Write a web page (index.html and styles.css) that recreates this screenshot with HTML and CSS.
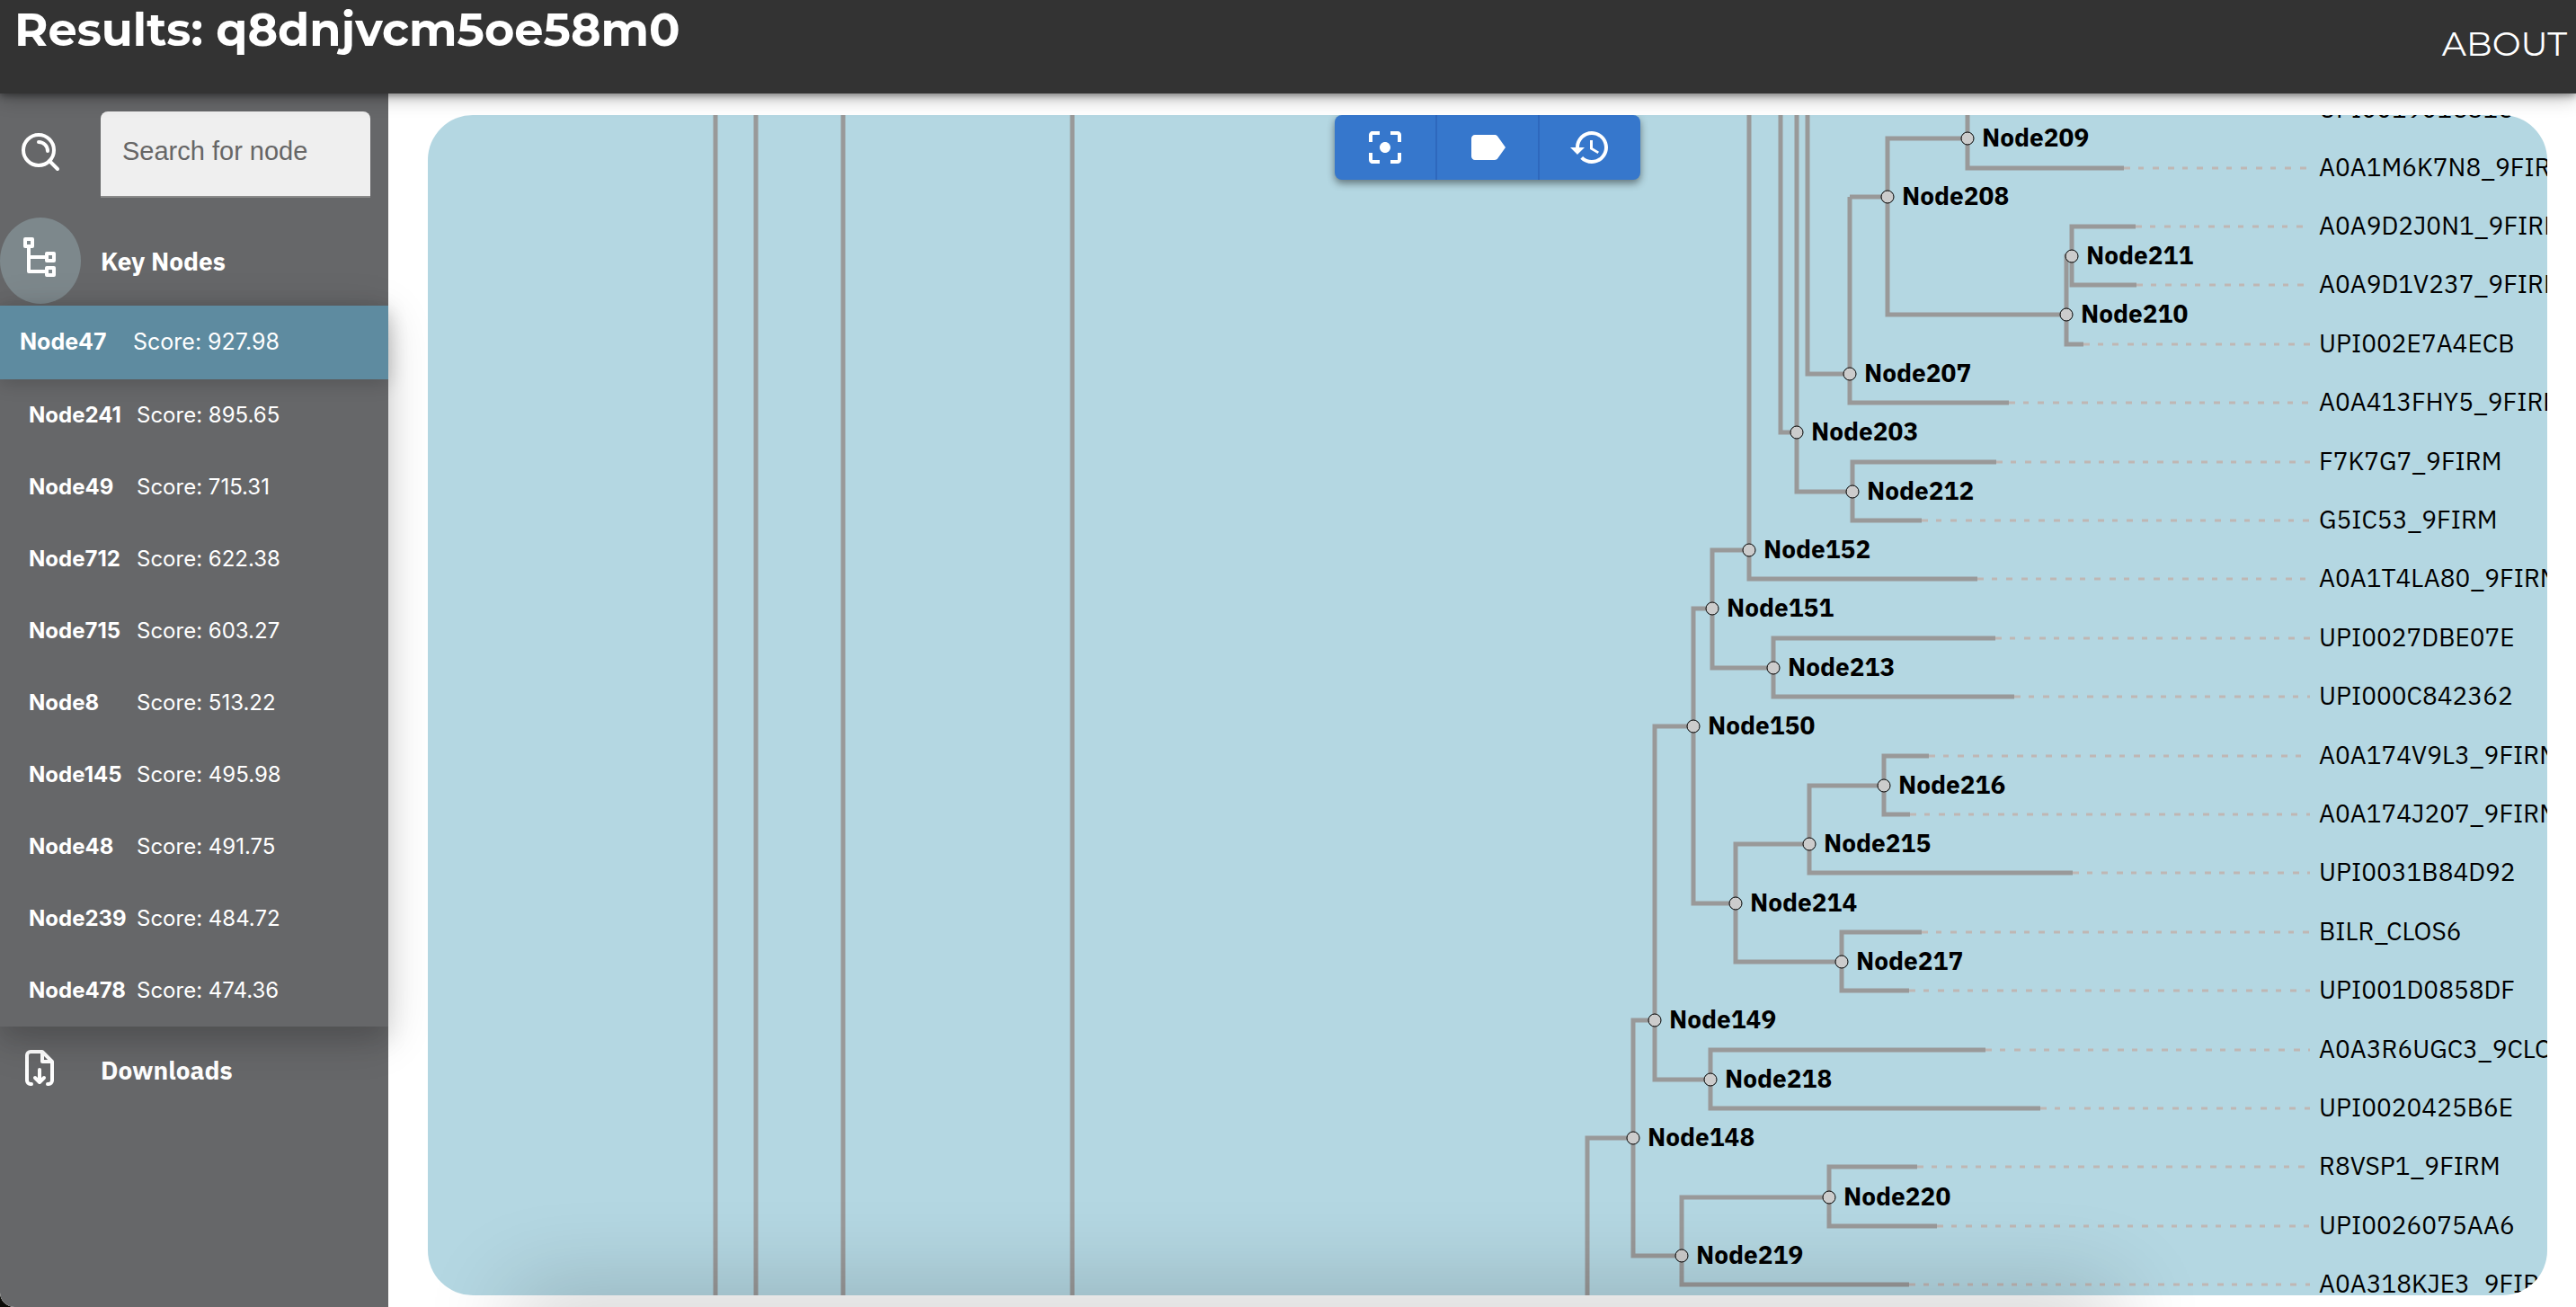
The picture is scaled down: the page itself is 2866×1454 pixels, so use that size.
FILE: index.html
```html
<!DOCTYPE html>
<html lang="en">
<head>
<meta charset="utf-8">
<title>Results: q8dnjvcm5oe58m0</title>
<link rel="stylesheet" href="styles.css">
</head>
<body>
<header class="topbar">
  <h1 class="title">Results: q8dnjvcm5oe58m0</h1>
  <a class="about" href="#about">ABOUT</a>
</header>
<div class="layout">
  <aside class="sidebar">
    <div class="side-row search-row">
      <label class="side-icon" for="node-search" aria-label="Search for node">
        <svg class="icon" width="48" height="48" viewBox="0 0 48 48"><g fill="none" stroke="#fff" stroke-width="4" stroke-linecap="round"><circle cx="21" cy="19" r="17"/><path d="M33 31l9 9M21 10a10 10 0 0 1 10 10"/></g></svg>
      </label>
      <input class="search" id="node-search" type="text" placeholder="Search for node">
    </div>
    <button class="side-row side-button" type="button">
      <span class="side-icon side-icon-active">
        <svg class="icon" width="48" height="48" viewBox="0 0 48 48"><g fill="none" stroke="#fff" stroke-width="4" stroke-linejoin="round"><path d="M6 0h8v8H6zM30 16h8v8h-8zM30 32h8v8h-8zM10 10v26h18M10 20h18"/></g></svg>
      </span>
      <span>Key Nodes</span>
    </button>
    <ul class="nodes">
      <li><button class="node active" type="button"><b>Node47</b><span>Score: 927.98</span></button></li>
      <li><button class="node" type="button"><b>Node241</b><span>Score: 895.65</span></button></li>
      <li><button class="node" type="button"><b>Node49</b><span>Score: 715.31</span></button></li>
      <li><button class="node" type="button"><b>Node712</b><span>Score: 622.38</span></button></li>
      <li><button class="node" type="button"><b>Node715</b><span>Score: 603.27</span></button></li>
      <li><button class="node" type="button"><b>Node8</b><span>Score: 513.22</span></button></li>
      <li><button class="node" type="button"><b>Node145</b><span>Score: 495.98</span></button></li>
      <li><button class="node" type="button"><b>Node48</b><span>Score: 491.75</span></button></li>
      <li><button class="node" type="button"><b>Node239</b><span>Score: 484.72</span></button></li>
      <li><button class="node" type="button"><b>Node478</b><span>Score: 474.36</span></button></li>
    </ul>
    <button class="side-row side-button" type="button">
      <span class="side-icon">
        <svg class="icon" width="48" height="48" viewBox="0 0 48 48"><g fill="none" stroke="#fff" stroke-width="4" stroke-linecap="round" stroke-linejoin="round"><path d="M13 40h-1a4 4 0 0 1-4-4V8a4 4 0 0 1 4-4h13l11 11v21a4 4 0 0 1-4 4h-1M25 5v10h10"/><path d="M22 24v13M17 33l5 5 5-5"/></g></svg>
      </span>
      <span>Downloads</span>
    </button>
  </aside>
  <main class="main">
    <section class="panel">
      <svg class="tree" role="img" aria-label="Phylogenetic tree">
        <g class="branches">
          <path d="M320 0V1400M365 0V1400M462 0V1400M717 0V1400"/>
          <path d="M1713 0V59H1887M1713 26H1624V222H1823M1624 91H1582M1900 124H1829V189H1901M1829 157H1823V255H1842"/>
          <path d="M1582 91V320H1759M1582 288H1535V0M1505 0V353H1523M1523 0V419H1585M1745 386H1585V451H1662"/>
          <path d="M1470 0V516H1724M1470 484H1429V615H1497M1744 582H1497V647H1765M1429 549H1408V877H1455"/>
          <path d="M1670 713H1620V778H1649M1620 746H1537V843H1830M1537 811H1455V942H1573M1662 909H1573V974H1648"/>
          <path d="M1408 680H1365V1073H1427M1733 1040H1427V1105H1794M1365 1007H1341V1269H1395M1341 1138H1290V1400"/>
          <path d="M1657 1170H1559V1236H1679M1559 1204H1395V1301H1648"/>
        </g>
        <g class="guides">
          <path d="M1887 59H2094M1900 124H2094M1901 189H2094M1842 255H2094M1759 320H2094M1745 386H2094M1662 451H2094M1724 516H2094M1744 582H2094M1765 647H2094"/>
          <path d="M1670 713H2094M1649 778H2094M1830 843H2094M1662 909H2094M1648 974H2094M1733 1040H2094M1794 1105H2094M1657 1170H2094M1679 1236H2094M1648 1301H2094"/>
        </g>
        <g class="leaves">
          <text x="2104" y="3">UPI001901C81C</text>
          <text x="2104" y="68">A0A1M6K7N8_9FIRM</text>
          <text x="2104" y="133">A0A9D2J0N1_9FIRM</text>
          <text x="2104" y="198">A0A9D1V237_9FIRM</text>
          <text x="2104" y="264">UPI002E7A4ECB</text>
          <text x="2104" y="329">A0A413FHY5_9FIRM</text>
          <text x="2104" y="395">F7K7G7_9FIRM</text>
          <text x="2104" y="460">G5IC53_9FIRM</text>
          <text x="2104" y="525">A0A1T4LA80_9FIRM</text>
          <text x="2104" y="591">UPI0027DBE07E</text>
          <text x="2104" y="656">UPI000C842362</text>
          <text x="2104" y="722">A0A174V9L3_9FIRM</text>
          <text x="2104" y="787">A0A174J207_9FIRM</text>
          <text x="2104" y="852">UPI0031B84D92</text>
          <text x="2104" y="918">BILR_CLOS6</text>
          <text x="2104" y="983">UPI001D0858DF</text>
          <text x="2104" y="1049">A0A3R6UGC3_9CLOT</text>
          <text x="2104" y="1114">UPI0020425B6E</text>
          <text x="2104" y="1179">R8VSP1_9FIRM</text>
          <text x="2104" y="1245">UPI0026075AA6</text>
          <text x="2104" y="1310">A0A318KJE3_9FIRM</text>
        </g>
        <g class="inner">
          <g transform="translate(1713 26)"><circle r="7"/><text x="16" y="9">Node209</text></g>
          <g transform="translate(1624 91)"><circle r="7"/><text x="16" y="9">Node208</text></g>
          <g transform="translate(1829 157)"><circle r="7"/><text x="16" y="9">Node211</text></g>
          <g transform="translate(1823 222)"><circle r="7"/><text x="16" y="9">Node210</text></g>
          <g transform="translate(1582 288)"><circle r="7"/><text x="16" y="9">Node207</text></g>
          <g transform="translate(1523 353)"><circle r="7"/><text x="16" y="9">Node203</text></g>
          <g transform="translate(1585 419)"><circle r="7"/><text x="16" y="9">Node212</text></g>
          <g transform="translate(1470 484)"><circle r="7"/><text x="16" y="9">Node152</text></g>
          <g transform="translate(1429 549)"><circle r="7"/><text x="16" y="9">Node151</text></g>
          <g transform="translate(1497 615)"><circle r="7"/><text x="16" y="9">Node213</text></g>
          <g transform="translate(1408 680)"><circle r="7"/><text x="16" y="9">Node150</text></g>
          <g transform="translate(1620 746)"><circle r="7"/><text x="16" y="9">Node216</text></g>
          <g transform="translate(1537 811)"><circle r="7"/><text x="16" y="9">Node215</text></g>
          <g transform="translate(1455 877)"><circle r="7"/><text x="16" y="9">Node214</text></g>
          <g transform="translate(1573 942)"><circle r="7"/><text x="16" y="9">Node217</text></g>
          <g transform="translate(1365 1007)"><circle r="7"/><text x="16" y="9">Node149</text></g>
          <g transform="translate(1427 1073)"><circle r="7"/><text x="16" y="9">Node218</text></g>
          <g transform="translate(1341 1138)"><circle r="7"/><text x="16" y="9">Node148</text></g>
          <g transform="translate(1559 1204)"><circle r="7"/><text x="16" y="9">Node220</text></g>
          <g transform="translate(1395 1269)"><circle r="7"/><text x="16" y="9">Node219</text></g>
        </g>
      </svg>
      <div class="toolbar" role="group" aria-label="Tree tools">
        <button class="tool" type="button" aria-label="Center tree"><svg class="icon" width="48" height="48" viewBox="0 0 24 24" fill="#fff"><path d="M5 15H3v4c0 1.100.9 2 2 2h4v-2H5v-4zM5 5h4V3H5c-1.100 0-2 .9-2 2v4h2V5zm14-2h-4v2h4v4h2V5c0-1.100-.9-2-2-2zm0 16h-4v2h4c1.100 0 2-.9 2-2v-4h-2v4zM12 9c-1.660 0-3 1.340-3 3s1.340 3 3 3 3-1.340 3-3-1.340-3-3-3z"/></svg></button>
        <button class="tool" type="button" aria-label="Toggle labels"><svg class="icon" width="48" height="48" viewBox="0 0 24 24" fill="#fff"><path d="M17.630 5.840C17.270 5.330 16.670 5 16 5L5 5.010C3.900 5.010 3 5.900 3 7v10c0 1.100.9 1.990 2 1.990L16 19c.67 0 1.270-.33 1.630-.84L22 12l-4.370-6.160z"/></svg></button>
        <button class="tool" type="button" aria-label="Reset view"><svg class="icon" width="48" height="48" viewBox="0 0 24 24" fill="#fff"><path d="M13 3c-4.970 0-9 4.030-9 9H1l3.890 3.890.07.14L9 12H6c0-3.870 3.130-7 7-7s7 3.130 7 7-3.130 7-7 7c-1.930 0-3.680-.79-4.940-2.060l-1.420 1.420C8.270 19.990 10.510 21 13 21c4.970 0 9-4.030 9-9s-4.030-9-9-9zm-1 5v5l4.280 2.540.72-1.210-3.500-2.080V8H12z"/></svg></button>
      </div>
    </section>
  </main>
</div>
</body>
</html>
```
FILE: styles.css
```css
* { box-sizing: border-box; }
html { background: #0c0c08; }
body {
  margin: 0;
  height: 100vh;
  display: flex;
  flex-direction: column;
  overflow: hidden;
  position: relative;
  background: #fff;
  border-bottom-left-radius: 16px;
  font-family: "IBM Plex Sans", "Noto Sans", sans-serif;
}
/* soft shade rising from the lower edge of the window */
body::after {
  content: "";
  position: absolute;
  left: 590px;
  right: 530px;
  bottom: -40px;
  height: 40px;
  box-shadow: 0 0 100px 20px rgba(0, 0, 0, 0.2);
  pointer-events: none;
}
button, input { font: inherit; border: 0; margin: 0; }
button { cursor: pointer; text-align: left; }
.icon { display: block; overflow: visible; }

.topbar {
  flex: none;
  height: 104px;
  display: flex;
  justify-content: space-between;
  align-items: flex-start;
  padding: 0 10px 0 16px;
  background: #333;
  color: #fff;
  font-family: "Montserrat", "DejaVu Sans", sans-serif;
  box-shadow: 0 4px 20px rgba(0, 0, 0, 0.3), 0 2px 8px rgba(0, 0, 0, 0.4);
  position: relative;
  z-index: 1;
}
.title { margin: 0; font-size: 51px; line-height: 66px; font-weight: 700; white-space: nowrap; }
.about { font-size: 38px; line-height: 98px; color: #fff; text-decoration: none; }

.layout { flex: 1; min-height: 0; display: flex; }
.sidebar {
  flex: none;
  width: 432px;
  padding-top: 20px;
  background: #666769;
  color: #fff;
  border-bottom-left-radius: 16px;
}
.side-row { display: flex; align-items: center; gap: 22px; width: 100%; padding: 0; }
.search-row { height: 96px; padding-right: 20px; margin-bottom: 22px; }
.side-button { height: 98px; background: none; color: #fff; font-size: 28px; font-weight: 700; align-items: flex-start; line-height: 98px; }
.side-icon { flex: none; width: 90px; height: 96px; padding-left: 22px; display: flex; align-items: center; }
.side-icon-active { background: #7d888c; border-radius: 50%; }
.search {
  flex: 1;
  min-width: 0;
  height: 96px;
  padding: 0 24px 6px;
  background: #efefef;
  border-bottom: 2px solid #8a8a8a;
  border-radius: 8px 8px 0 0;
  font-family: "Liberation Sans", sans-serif;
  font-size: 29px;
  color: #222;
}
.search::placeholder { color: #666; opacity: 1; }
.nodes {
  list-style: none;
  margin: 0;
  padding: 0;
  background: #666769;
  box-shadow: 0 12px 48px rgba(0, 0, 0, 0.16), 0 16px 24px rgba(0, 0, 0, 0.1);
  position: relative;
  font-family: "Inter", sans-serif;
}
.node {
  display: grid;
  grid-template-columns: 120px 1fr;
  align-items: center;
  width: 100%;
  height: 80px;
  padding: 0 0 2px 32px;
  background: none;
  color: #fff;
  font-size: 24px;
}
.node.active {
  height: 82px;
  grid-template-columns: 126px 1fr;
  padding-left: 22px;
  background: #5e8ba0;
  font-size: 25px;
  box-shadow: 0 4px 20px rgba(0, 0, 0, 0.18);
}

.main { flex: 1; min-width: 0; padding: 24px 32px 13px 44px; }
.panel {
  position: relative;
  height: 100%;
  overflow: hidden;
  border-radius: 50px;
  background: #b4d7e2;
}
.tree { display: block; width: 100%; height: 100%; }
.branches { fill: none; stroke: #999; stroke-width: 5; }
.guides { fill: none; stroke: #bfb7b4; stroke-width: 3; stroke-dasharray: 7 9 6 10 7 10; }
.leaves { font-size: 28px; }
.inner { font-size: 28px; font-weight: 700; }
.inner circle { fill: #ccc; stroke: #000; stroke-width: 1; }
.toolbar {
  position: absolute;
  top: 0;
  left: 50%;
  transform: translateX(-50%);
  display: flex;
  border-radius: 8px;
  background: #3677cc;
  box-shadow: 0 4px 8px rgba(0, 0, 0, 0.45);
}
.tool { height: 72px; padding: 0 32px; background: none; }
.tool + .tool { border-left: 2px solid #2e68bd; }
```
